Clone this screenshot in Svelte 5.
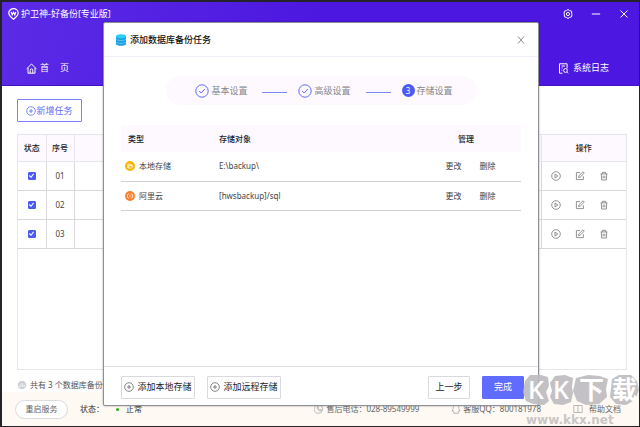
<script lang="ts">
  interface Task {
    id: string;
    enabled: boolean;
  }

  interface Target {
    kind: "local" | "aliyun";
    name: string;
    path: string;
  }

  let tasks = $state<Task[]>([
    { id: "01", enabled: true },
    { id: "02", enabled: true },
    { id: "03", enabled: true },
  ]);

  const targets: Target[] = [
    { kind: "local", name: "本地存储", path: "E:\\backup\\" },
    { kind: "aliyun", name: "阿里云", path: "[hwsbackup]/sql" },
  ];

  const steps = ["基本设置", "高级设置", "存储设置"];
  const current = 2;
</script>

{#snippet plus()}
  <svg class="icon" viewBox="0 0 10 10" aria-hidden="true">
    <circle cx="5" cy="5" r="4.3" />
    <path d="M5 3v4M3 5h4" />
  </svg>
{/snippet}

<div class="window">
  <header>
    <div class="titlebar">
      <svg class="logo" viewBox="0 0 11 12" aria-hidden="true">
        <path d="M5.5 11.2C3.5 9.6.8 7.8.8 5A4.7 4.3 0 0 1 10.200 5C10.200 7.800 7.500 9.600 5.500 11.200Z" />
        <path d="M3.200 4l1 2.800 1.300-2.500 1.300 2.500 1-2.800" />
      </svg>
      <h1>护卫神-好备份[专业版]</h1>
      <div class="controls">
        <button type="button" aria-label="设置">
          <svg viewBox="0 0 10 10">
            <path d="M5 .5l1.500 1 2 .7.2 1.900.2 1.800-.4 1.900-2 .7-1.500 1-1.500-1-2-.7-.2-1.900-.2-1.800.4-1.900 2-.7z" />
            <circle cx="5" cy="5" r="1.600" />
          </svg>
        </button>
        <button type="button" aria-label="最小化">
          <svg viewBox="0 0 10 10"><path d="M.8 5h8.400" /></svg>
        </button>
        <button type="button" aria-label="关闭">
          <svg viewBox="0 0 10 10"><path d="M1.500 1.500l7 7M8.500 1.500l-7 7" /></svg>
        </button>
      </div>
    </div>
    <nav>
      <a href="#home">
        <svg viewBox="0 0 11 11" aria-hidden="true">
          <path d="M.7 5.800L5.500 1l4.800 4.800M2 5v5.200h7V5M4.200 10V7.200a1.300 1.300 0 0 1 2.600 0V10" />
        </svg>
        <span class="spread"><span>首</span><span>页</span></span>
      </a>
      <a href="#logs">
        <svg viewBox="0 0 11 11" aria-hidden="true">
          <path d="M4.500 10.200H1.500V.8h7.600v4.600M3.500 3h3.600M3.500 5h1.200M9.200 9.200l1 1.200M3.500 7.200h.8" />
          <circle cx="7.500" cy="7.500" r="1.900" />
        </svg>
        系统日志
      </a>
    </nav>
  </header>

  <main>
    <button class="new-task" type="button">{@render plus()}新增任务</button>
    <div class="task-box">
      <table class="tasks">
        <thead>
          <tr>
            <th class="narrow">状态</th>
            <th class="narrow">序号</th>
            <th></th>
            <th class="ops">操作</th>
          </tr>
        </thead>
        <tbody>
          {#each tasks as task (task.id)}
            <tr>
              <td><input type="checkbox" aria-label="启用 {task.id}" bind:checked={task.enabled} /></td>
              <td>{task.id}</td>
              <td></td>
              <td class="ops">
                <div class="actions">
                  <button type="button" aria-label="运行">
                    <svg viewBox="0 0 10 10"><circle cx="5" cy="5" r="4.300" /><path d="M4 3l2.800 2L4 7z" /></svg>
                  </button>
                  <button type="button" aria-label="编辑">
                    <svg viewBox="0 0 10 10"><path d="M5 1.600H1.400v7h7V5.200M3.600 6.500l.3-1.700L8 .8l1.300 1.300-4.100 4z" /></svg>
                  </button>
                  <button type="button" aria-label="删除">
                    <svg viewBox="0 0 10 10"><path d="M1.600 2.900h6.800M3.400 2.700V1.300h3.200v1.400M2.300 3l.4 6h4.600l.4-6M4.200 4.700v2.600M5.800 4.700v2.600" /></svg>
                  </button>
                </div>
              </td>
            </tr>
          {/each}
        </tbody>
      </table>
    </div>
    <p class="summary">
      <svg viewBox="0 0 10 10" aria-hidden="true">
        <circle cx="5" cy="5" r="4.600" />
        <path d="M3 7V4.800M5 7V3M7 7V4.800" />
      </svg>
      共有 3 个数据库备份任务
    </p>
  </main>

  <footer>
    <button class="restart" type="button">重启服务</button>
    <span class="status">状态：<i></i><b>正常</b></span>
    <div class="contacts">
      <span>
        <svg viewBox="0 0 10 10" aria-hidden="true">
          <path d="M1.500 1.800a4.300 4.300 0 1 0 2-1M3.200 2.600c-.5 2.500 1.500 4.600 4 4.500l.3-1.200-1.400-.6-.7.500-1.200-1.300.5-.7-.4-1.300z" />
        </svg>
        售后电话：028-89549999
      </span>
      <span>
        <svg viewBox="0 0 10 10" aria-hidden="true">
          <path d="M5 1C2.500 1 2.200 3 2.200 4.500L1 7.200l1.200-.4L3 8.500 2.500 9.300h5L7 8.500l.8-1.700 1.200.4-1.200-2.700C7.800 3 7.500 1 5 1z" />
        </svg>
        客服QQ：800181978
      </span>
      <a href="#help">
        <svg viewBox="0 0 10 10" aria-hidden="true"><path d="M.8 1.500h8.400v7H.8zM5 1.500v7" /></svg>
        帮助文档
      </a>
    </div>
  </footer>

  <div class="modal" role="dialog" aria-labelledby="dialog-title">
    <div class="modal-head">
      <svg class="db" viewBox="0 0 10 12" aria-hidden="true">
        <path fill="#1b9fe0" d="M0 2v8c0 2.400 10 2.400 10 0V2z" />
        <path fill="none" stroke="#6fd3fa" stroke-width=".7" d="M0 5c0 2 10 2 10 0M0 7.800c0 2 10 2 10 0" />
        <ellipse cx="5" cy="2.300" rx="5" ry="2" fill="#29cdf5" />
      </svg>
      <h2 id="dialog-title">添加数据库备份任务</h2>
      <button class="close" type="button" aria-label="关闭">
        <svg viewBox="0 0 10 10"><path d="M2 1.500l6 7M8 1.500l-6 7" /></svg>
      </button>
    </div>
    <div class="modal-body">
      <ol class="steps">
        {#each steps as step, i}
          {#if i > 0}
            <li class="line" aria-hidden="true"></li>
          {/if}
          <li class="step">
            {#if i < current}
              <svg viewBox="0 0 14 14" aria-hidden="true">
                <circle cx="7" cy="7" r="6.200" />
                <path d="M4.200 7l2 2 3.600-4" />
              </svg>
            {:else}
              <span class="dot">{i + 1}</span>
            {/if}
            {step}
          </li>
        {/each}
      </ol>
      <table class="targets">
        <thead>
          <tr>
            <th class="kind">类型</th>
            <th>存储对象</th>
            <th class="manage">管理</th>
          </tr>
        </thead>
        <tbody>
          {#each targets as target}
            <tr>
              <td class="kind">
                <div class="kind-name">
                  {#if target.kind === "local"}
                    <svg viewBox="0 0 10 10" aria-hidden="true">
                      <circle cx="5" cy="5" r="5" fill="#f7b500" stroke="none" />
                      <path d="M2.800 7V3h1.600l.6.8h1.700v.9M2.800 7l.9-2.300h3.900L6.800 7z" />
                    </svg>
                  {:else}
                    <svg viewBox="0 0 10 10" aria-hidden="true">
                      <circle cx="5" cy="5" r="5" fill="#fa7f2d" stroke="none" />
                      <path d="M4.200 3H3.300Q2.300 3 2.300 5t1 2h.9M5.800 3h.9Q7.700 3 7.700 5t-1 2h-.9M4.200 5h1.600" />
                    </svg>
                  {/if}
                  {target.name}
                </div>
              </td>
              <td>{target.path}</td>
              <td class="manage">
                <button type="button">更改</button>
                <button type="button">删除</button>
              </td>
            </tr>
          {/each}
        </tbody>
      </table>
    </div>
    <div class="modal-foot">
      <button type="button">{@render plus()}添加本地存储</button>
      <button type="button">{@render plus()}添加远程存储</button>
      <button class="prev" type="button">上一步</button>
      <button class="primary" type="button">完成</button>
    </div>
  </div>

  <div class="watermark">
    <svg class="mark" viewBox="0 0 116 32">
      <g class="blobs">
        <path d="M7 1l11 0 7 2 1 9-3 6 3 9-5 4-11-1-7-3-3-9 2-11z" />
        <path d="M32 2l10-1 8 3-1 9 1 6-2 9-8 3-9-1-4-7 2-6-2-8z" />
        <path d="M53 4l12-3 12 1 8 3-2 10 1 8-8 7-13 1-9-4-4-10z" />
        <path d="M89 5l7-4 12 0 6 6 2 9-4 10-9 5-10-1-6-7 1-9z" />
      </g>
      <text x="5" y="25">K</text>
      <text x="30" y="25">K</text>
      <text x="56" y="25">下</text>
      <text x="89" y="25">载</text>
    </svg>
    <div class="site">www.kkx.net</div>
  </div>
</div>

<style>
  :global(body) {
    margin: 0;
  }

  .window {
    position: relative;
    box-sizing: border-box;
    min-height: 100vh;
    display: flex;
    flex-direction: column;
    border: 1px solid #24222b;
    border-width: 2px 1px 1px 2px;
    background: #fff;
    color: #444;
    font-family: "Noto Sans", "Noto Sans CJK SC", sans-serif;
    font-size: 8px;
    line-height: 12px;
  }

  .window * {
    box-sizing: border-box;
  }

  h1,
  h2,
  p,
  ol {
    margin: 0;
    padding: 0;
    font-size: 9px;
    font-weight: 400;
    list-style: none;
  }

  button {
    padding: 0;
    border: 0;
    background: none;
    color: inherit;
    font: inherit;
    cursor: pointer;
  }

  a {
    color: inherit;
    text-decoration: none;
  }

  svg {
    display: block;
    flex-shrink: 0;
    width: 10px;
    height: 10px;
    fill: none;
    stroke: currentColor;
    stroke-width: 0.8;
  }

  header {
    height: 84px;
    display: flex;
    flex-direction: column;
    justify-content: space-between;
    background: linear-gradient(100deg, #5b2be6, #4c17e0 50%);
    border-bottom: 1px solid #4311c4;
    color: #fff;
  }

  .titlebar {
    display: flex;
    align-items: center;
    height: 24px;
    padding-left: 6px;
  }

  .logo {
    width: 11px;
    height: 12px;
    margin-right: 2px;
    stroke-width: 1.2;
  }

  .controls {
    display: flex;
    margin-left: auto;
    padding-right: 1px;
  }

  .controls button {
    display: grid;
    place-items: center;
    width: 28px;
    height: 20px;
  }

  .controls svg {
    stroke-width: 1;
  }

  nav {
    display: flex;
    justify-content: space-between;
    padding: 0 30px 11px 24px;
    font-size: 9px;
  }

  nav a {
    display: flex;
    align-items: center;
    gap: 3px;
  }

  nav a:last-child {
    gap: 4px;
  }

  nav svg {
    width: 11px;
    height: 11px;
    stroke-width: 1;
  }

  .spread {
    display: flex;
    gap: 11px;
  }

  main {
    flex: 1;
    display: flex;
    flex-direction: column;
    padding: 13px 12px 0 15px;
  }

  .new-task {
    display: flex;
    align-items: center;
    align-self: flex-start;
    justify-content: center;
    width: 65px;
    height: 23px;
    border: 1px solid #7781f8;
    border-radius: 1px;
    color: #5f6cf5;
    font-size: 9px;
  }

  .task-box {
    flex: 1;
    margin-top: 12px;
    border: 1px solid #e6e6ea;
  }

  table {
    width: 100%;
    border-collapse: collapse;
    table-layout: fixed;
  }

  th {
    color: #222;
    font-weight: 500;
    background: #fdf9ff;
  }

  .tasks th,
  .tasks td {
    padding: 0;
    border: 1px solid #d9d9dd;
    border-width: 0 1px 1px 0;
    text-align: center;
  }

  .tasks th {
    height: 26px;
    border-color: #e8e6ec;
  }

  .tasks td {
    height: 29px;
  }

  .tasks th:last-child,
  .tasks td:last-child {
    border-right: 0;
  }

  .narrow {
    width: 28px;
  }

  .tasks .ops {
    width: 85px;
  }

  input[type="checkbox"] {
    appearance: none;
    display: block;
    width: 8px;
    height: 8px;
    margin: 0 auto;
    border: 1px solid #4b5af5;
    border-radius: 1px;
  }

  input[type="checkbox"]:checked {
    background: #4b5af5
      url("data:image/svg+xml,%3Csvg xmlns='http://www.w3.org/2000/svg' viewBox='0 0 8 8'%3E%3Cpath d='M1.500 4l2 2 3-4' fill='none' stroke='white' stroke-width='1.300'/%3E%3C/svg%3E")
      center / 7px no-repeat;
  }

  .actions {
    display: flex;
    justify-content: center;
    gap: 14px;
    padding-right: 7px;
    color: #777;
  }

  .summary {
    display: flex;
    align-items: center;
    gap: 3px;
    height: 22px;
    padding-top: 7px;
    color: #555;
    font-size: 8px;
  }

  .summary svg {
    fill: #d0d0d4;
    stroke: #fff;
  }

  footer {
    display: flex;
    align-items: center;
    height: 34px;
    padding: 0 18px 0 13px;
    background: #fef9f3;
    color: #666;
  }

  .restart {
    width: 53px;
    height: 19px;
    border: 1px solid #dcdadd;
    border-radius: 10px;
    background: #fff;
  }

  .status {
    display: flex;
    align-items: center;
    margin-left: 12px;
    color: #333;
  }

  .status i {
    width: 3px;
    height: 3px;
    margin: 0 7px 0 12px;
    border-radius: 50%;
    background: #27b400;
  }

  .status b {
    font-weight: 400;
  }

  .contacts {
    display: flex;
    gap: 32px;
    margin-left: auto;
  }

  .contacts > * {
    display: flex;
    align-items: center;
    gap: 2px;
  }

  .contacts svg {
    color: #aaa;
  }

  .contacts a {
    gap: 6px;
  }

  .modal {
    position: absolute;
    inset: 20px 100px 20px 101px;
    display: flex;
    flex-direction: column;
    border: 1px solid #8d9096;
    border-radius: 2px;
    background: #fff;
    box-shadow: 0 0 2px #0006;
  }

  .modal-head {
    display: flex;
    align-items: center;
    gap: 4px;
    height: 34px;
    padding: 0 12px;
    border-bottom: 1px solid #f1effa;
  }

  .modal-head h2 {
    color: #111;
    font-weight: 500;
  }

  .db {
    height: 12px;
    stroke: none;
  }

  .close {
    margin-left: auto;
    color: #777;
  }

  .modal-body {
    flex: 1;
    padding: 19px 17px;
  }

  .steps {
    display: flex;
    align-items: center;
    justify-content: center;
    gap: 11px;
    height: 29px;
    margin: 0 44px 0 45px;
    padding-left: 5px;
    border-radius: 15px;
    background: #fdf9ff;
    color: #888;
    font-size: 9px;
  }

  .step {
    display: flex;
    align-items: center;
    gap: 2px;
    padding-right: 4px;
  }

  .step:last-child {
    padding-right: 0;
  }

  .step svg {
    width: 14px;
    height: 14px;
    color: #5f6cf5;
    stroke-width: 1;
  }

  .dot {
    width: 13px;
    height: 13px;
    border-radius: 50%;
    background: #4b5af5;
    color: #fff;
    font-size: 8px;
    line-height: 13px;
    text-align: center;
  }

  .line {
    width: 25px;
    height: 1px;
    margin-top: 3px;
    background: #7c87f8;
  }

  .targets {
    margin-top: 20px;
  }

  .targets th,
  .targets td {
    padding: 0;
    text-align: left;
  }

  .targets th {
    height: 27px;
  }

  .targets td {
    height: 29px;
    border-bottom: 1px solid #d0d0d3;
  }

  .targets .kind {
    width: 98px;
  }

  .targets th.kind {
    padding-left: 7px;
  }

  .kind-name {
    display: flex;
    align-items: center;
    gap: 4px;
    padding-left: 4px;
  }

  .kind-name svg {
    stroke: #fff;
  }

  .targets .manage {
    width: 110px;
    text-align: center;
  }

  .targets td.manage {
    padding-left: 9px;
  }

  .manage button {
    margin: 0 8px;
  }

  .modal-foot {
    display: flex;
    gap: 12px;
    align-items: center;
    height: 39px;
    padding: 2px 14px 0 17px;
    border-top: 1px solid #dedee2;
  }

  .modal-foot button {
    display: flex;
    align-items: center;
    justify-content: center;
    gap: 3px;
    width: 74px;
    height: 23px;
    border: 1px solid #dadade;
    border-radius: 1px;
    color: #222;
    font-size: 9px;
  }

  .modal-foot .icon {
    color: #666;
  }

  .modal-foot .prev {
    width: 42px;
    margin-left: auto;
  }

  .modal-foot .primary {
    width: 42px;
    border-color: #606cff;
    background: #606cff;
    color: #fff;
  }

  .watermark {
    position: absolute;
    right: 0;
    bottom: 0;
    width: 116px;
    display: flex;
    flex-direction: column;
    gap: 8px;
    pointer-events: none;
  }

  .mark {
    width: 116px;
    height: 32px;
    overflow: visible;
    stroke: none;
  }

  .blobs {
    fill: #bdbbbe;
    opacity: 0.9;
  }

  .mark text {
    fill: #fff;
    font-family: "Open Sans", "Noto Sans CJK SC", sans-serif;
    font-size: 25px;
    font-weight: 600;
  }

  .site {
    padding-left: 3px;
    color: #c9c6c5;
    font-family: "DejaVu Sans", sans-serif;
    font-size: 12px;
    font-weight: 700;
    line-height: 12px;
  }
</style>
